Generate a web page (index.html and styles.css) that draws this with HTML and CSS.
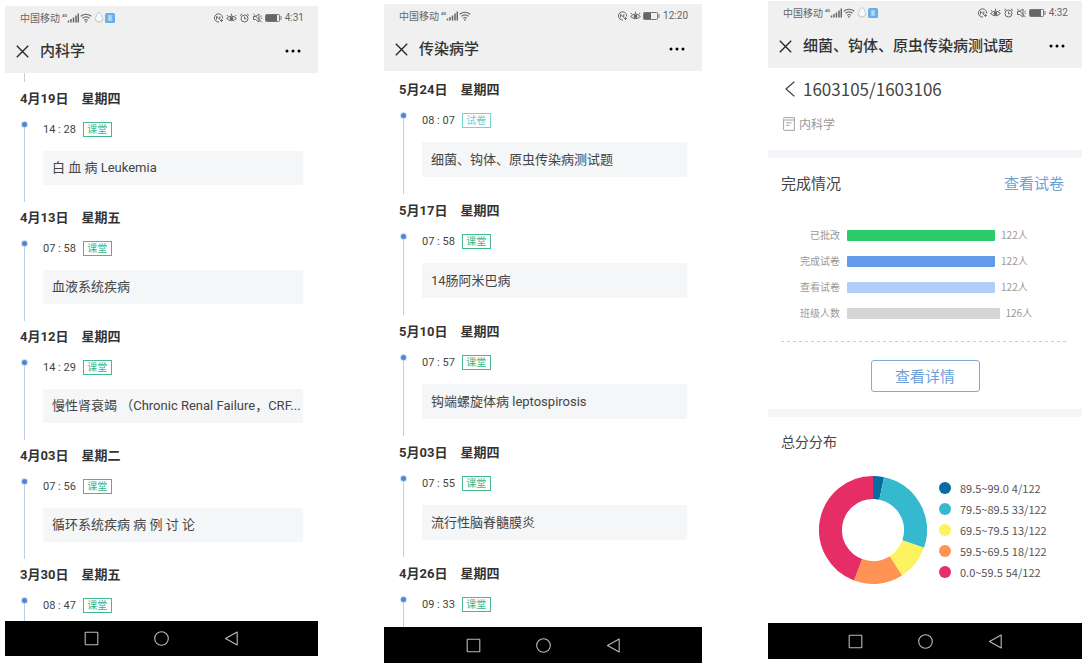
FILE: index.html
```html
<!DOCTYPE html>
<html lang="zh-CN">
<head>
<meta charset="utf-8">
<meta name="viewport" content="width=device-width, initial-scale=1">
<title>课程记录</title>
<link rel="stylesheet" href="styles.css">
</head>
<body>
<svg class="sprite" aria-hidden="true">
  <symbol id="signal" viewBox="0 0 12 10"><path d="M1.500 9.500V7.500M4 9.500V6M6.500 9.500V4.500M9 9.500V2.500M11.300 9.500V.5" stroke="#666" stroke-width="1.500" fill="none"/></symbol>
  <symbol id="wifi" viewBox="0 0 12 10"><path d="M.7 3.300Q6-.9 11.300 3.300M2.500 5.300Q6 2.500 9.500 5.300M4.200 7.300Q6 5.800 7.800 7.300" stroke="#666" stroke-width="1.100" fill="none"/><circle cx="6" cy="8.800" r=".9" fill="#666"/></symbol>
  <symbol id="qq" viewBox="0 0 10 11"><path d="M5 .8C3.200.8 2.500 2.200 2.500 4 1.500 5.500 1 6.800 1.200 8.300L2.200 7.700C2.700 9 3.500 9.600 5 9.600S7.300 9 7.800 7.700L8.800 8.300C9 6.800 8.500 5.500 7.500 4 7.500 2.200 6.800.8 5 .8Z" fill="#f8fafb" stroke="#a9c8d8" stroke-width=".8"/><path d="M2 10h2.500M5.500 10H8" stroke="#e8d477" stroke-width="1.200"/></symbol>
  <symbol id="app" viewBox="0 0 10 10"><rect width="10" height="10" rx="1.500" fill="#69aee8"/><path d="M2.800 3H7.200M2.800 5H7.200M2.800 7H7.200M5 2.500V7.500" stroke="#d8efff" stroke-width=".9"/></symbol>
  <symbol id="nfc" viewBox="0 0 10 10"><path d="M5.500 9A4.100 4.100 0 1 1 9.100 5.500M3 6.500V3.300L6.300 6.300V3.300" stroke="#666" fill="none"/><path d="M6.500 7.500h3M8 6v3" stroke="#666" stroke-width=".9"/></symbol>
  <symbol id="eye" viewBox="0 0 11 10"><path d="M.6 5.500Q5.500.5 10.400 5.500 5.500 10 .6 5.500ZM2 3.300.9 2M5.500 2.500V.7M9 3.300 10.100 2" stroke="#666" fill="none"/><circle cx="5.500" cy="5.400" r="1.800" fill="#666"/></symbol>
  <symbol id="alarm" viewBox="0 0 10 10"><circle cx="5" cy="5.500" r="3.500" stroke="#666" fill="none"/><path d="M5 3.500V5.800H6.800M.6 2.500 2.600.8M9.400 2.500 7.400.8" stroke="#666" fill="none"/></symbol>
  <symbol id="mute" viewBox="0 0 10 10"><path d="M1 3.500H3L6.500 1V9L3 6.500H1ZM.8.8 9.200 9.200M8 3.500 9.300 2.800M8.200 5.300H9.600" stroke="#666" fill="none"/></symbol>
  <symbol id="battery" viewBox="0 0 17 8"><rect x=".5" y=".5" width="14" height="7" rx=".8" stroke="#777" fill="none"/><rect x="1" y="1" width="11" height="6" fill="#666"/><path d="M16 2v4" stroke="#777"/></symbol>
  <symbol id="battery-half" viewBox="0 0 17 8"><rect x=".5" y=".5" width="14" height="7" rx=".8" stroke="#777" fill="none"/><rect x="1" y="1" width="7" height="6" fill="#666"/><path d="M16 2v4" stroke="#777"/></symbol>
  <symbol id="close" viewBox="0 0 13 13"><path d="M.8.8 12.200 12.200M12.200.8.8 12.200" stroke="#222" stroke-width="1.300"/></symbol>
  <symbol id="more" viewBox="0 0 16 4"><circle cx="2" cy="2" r="1.500"/><circle cx="8" cy="2" r="1.500"/><circle cx="14" cy="2" r="1.500"/></symbol>
  <symbol id="nav-square" viewBox="0 0 15 15"><rect x="1.200" y="1.200" width="12.600" height="12.600" rx=".5" stroke="#bbb" stroke-width="1.100" fill="none"/></symbol>
  <symbol id="nav-circle" viewBox="0 0 15 15"><circle cx="7.500" cy="7.500" r="6.800" stroke="#bbb" stroke-width="1.100" fill="none"/></symbol>
  <symbol id="nav-back" viewBox="0 0 15 15"><path d="M13.200 1V14L1.500 7.500Z" stroke="#bbb" stroke-width="1.100" stroke-linejoin="round" fill="none"/></symbol>
  <symbol id="chevron" viewBox="0 0 10 16"><path d="M9.300.8 1 8 9.300 15.200" stroke="#444" stroke-width="1.200" fill="none"/></symbol>
  <symbol id="book" viewBox="0 0 12 14"><path d="M.6 3V12.500Q.6 13.400 1.500 13.400H11.400V.6H1.500Q.6.6.6 1.800 .6 3 1.500 3H11.400M3.200 5.800H8.500M3.200 8.300H6.500" stroke="#999" stroke-width=".9" fill="none"/></symbol>
</svg>

<main class="gallery">
  <section class="phone phone-a">
    <header class="top">
      <div class="status">
        <span>中国移动</span><small>4G</small>
        <svg class="i-signal"><use href="#signal"/></svg><svg class="i-wifi"><use href="#wifi"/></svg><svg class="i-qq"><use href="#qq"/></svg><svg class="i-app"><use href="#app"/></svg>
        <div class="status-right"><svg class="i-mini"><use href="#nfc"/></svg><svg class="i-mini"><use href="#eye"/></svg><svg class="i-mini"><use href="#alarm"/></svg><svg class="i-mini"><use href="#mute"/></svg><svg class="i-battery"><use href="#battery"/></svg><time>4:31</time></div>
      </div>
      <div class="titlebar">
        <button class="icon-button" aria-label="关闭"><svg class="i-close"><use href="#close"/></svg></button>
        <h1>内科学</h1>
        <button class="icon-button" aria-label="更多"><svg class="i-more"><use href="#more"/></svg></button>
      </div>
    </header>
    <div class="timeline">
      <div class="stub"></div>
      <article class="day">
        <h2><span>4月19日</span><span>星期四</span></h2>
        <div class="entry"><div class="rail"></div><div class="lesson"><p class="when"><time>14 : 28</time><span class="tag">课堂</span></p><a class="card" href="#">白 血 病 Leukemia</a></div></div>
      </article>
      <article class="day">
        <h2><span>4月13日</span><span>星期五</span></h2>
        <div class="entry"><div class="rail"></div><div class="lesson"><p class="when"><time>07 : 58</time><span class="tag">课堂</span></p><a class="card" href="#">血液系统疾病</a></div></div>
      </article>
      <article class="day">
        <h2><span>4月12日</span><span>星期四</span></h2>
        <div class="entry"><div class="rail"></div><div class="lesson"><p class="when"><time>14 : 29</time><span class="tag">课堂</span></p><a class="card" href="#">慢性肾衰竭 （Chronic Renal Failure，CRF...</a></div></div>
      </article>
      <article class="day">
        <h2><span>4月03日</span><span>星期二</span></h2>
        <div class="entry"><div class="rail"></div><div class="lesson"><p class="when"><time>07 : 56</time><span class="tag">课堂</span></p><a class="card" href="#">循环系统疾病 病 例 讨 论</a></div></div>
      </article>
      <article class="day day-last">
        <h2><span>3月30日</span><span>星期五</span></h2>
        <div class="entry"><div class="rail"></div><div class="lesson"><p class="when"><time>08 : 47</time><span class="tag">课堂</span></p></div></div>
      </article>
    </div>
    <nav class="keys" aria-label="系统导航">
      <button class="icon-button" aria-label="最近任务"><svg class="i-key"><use href="#nav-square"/></svg></button>
      <button class="icon-button" aria-label="主屏幕"><svg class="i-key"><use href="#nav-circle"/></svg></button>
      <button class="icon-button" aria-label="返回"><svg class="i-key"><use href="#nav-back"/></svg></button>
    </nav>
  </section>

  <section class="phone phone-b">
    <header class="top">
      <div class="status">
        <span>中国移动</span><small>4G</small>
        <svg class="i-signal"><use href="#signal"/></svg><svg class="i-wifi"><use href="#wifi"/></svg>
        <div class="status-right"><svg class="i-mini"><use href="#nfc"/></svg><svg class="i-mini"><use href="#eye"/></svg><svg class="i-battery"><use href="#battery-half"/></svg><time>12:20</time></div>
      </div>
      <div class="titlebar">
        <button class="icon-button" aria-label="关闭"><svg class="i-close"><use href="#close"/></svg></button>
        <h1>传染病学</h1>
        <button class="icon-button" aria-label="更多"><svg class="i-more"><use href="#more"/></svg></button>
      </div>
    </header>
    <div class="timeline">
      <article class="day">
        <h2><span>5月24日</span><span>星期四</span></h2>
        <div class="entry"><div class="rail"></div><div class="lesson"><p class="when"><time>08 : 07</time><span class="tag tag-exam">试卷</span></p><a class="card" href="#">细菌、钩体、原虫传染病测试题</a></div></div>
      </article>
      <article class="day">
        <h2><span>5月17日</span><span>星期四</span></h2>
        <div class="entry"><div class="rail"></div><div class="lesson"><p class="when"><time>07 : 58</time><span class="tag">课堂</span></p><a class="card" href="#">14肠阿米巴病</a></div></div>
      </article>
      <article class="day">
        <h2><span>5月10日</span><span>星期四</span></h2>
        <div class="entry"><div class="rail"></div><div class="lesson"><p class="when"><time>07 : 57</time><span class="tag">课堂</span></p><a class="card" href="#">钩端螺旋体病 leptospirosis</a></div></div>
      </article>
      <article class="day">
        <h2><span>5月03日</span><span>星期四</span></h2>
        <div class="entry"><div class="rail"></div><div class="lesson"><p class="when"><time>07 : 55</time><span class="tag">课堂</span></p><a class="card" href="#">流行性脑脊髓膜炎</a></div></div>
      </article>
      <article class="day day-last">
        <h2><span>4月26日</span><span>星期四</span></h2>
        <div class="entry"><div class="rail"></div><div class="lesson"><p class="when"><time>09 : 33</time><span class="tag">课堂</span></p></div></div>
      </article>
    </div>
    <nav class="keys" aria-label="系统导航">
      <button class="icon-button" aria-label="最近任务"><svg class="i-key"><use href="#nav-square"/></svg></button>
      <button class="icon-button" aria-label="主屏幕"><svg class="i-key"><use href="#nav-circle"/></svg></button>
      <button class="icon-button" aria-label="返回"><svg class="i-key"><use href="#nav-back"/></svg></button>
    </nav>
  </section>

  <section class="phone phone-c">
    <header class="top">
      <div class="status">
        <span>中国移动</span><small>4G</small>
        <svg class="i-signal"><use href="#signal"/></svg><svg class="i-wifi"><use href="#wifi"/></svg><svg class="i-qq"><use href="#qq"/></svg><svg class="i-app"><use href="#app"/></svg>
        <div class="status-right"><svg class="i-mini"><use href="#nfc"/></svg><svg class="i-mini"><use href="#eye"/></svg><svg class="i-mini"><use href="#alarm"/></svg><svg class="i-mini"><use href="#mute"/></svg><svg class="i-battery"><use href="#battery"/></svg><time>4:32</time></div>
      </div>
      <div class="titlebar">
        <button class="icon-button" aria-label="关闭"><svg class="i-close"><use href="#close"/></svg></button>
        <h1>细菌、钩体、原虫传染病测试题</h1>
        <button class="icon-button" aria-label="更多"><svg class="i-more"><use href="#more"/></svg></button>
      </div>
    </header>
    <div class="report">
      <section class="intro">
        <div class="class-row"><button class="icon-button" aria-label="返回上一页"><svg class="i-chevron"><use href="#chevron"/></svg></button><h2>1603105/1603106</h2></div>
        <p class="subject"><svg class="i-book"><use href="#book"/></svg>内科学</p>
      </section>
      <section class="progress">
        <div class="section-head"><h3>完成情况</h3><a href="#">查看试卷</a></div>
        <dl class="bars">
          <div class="bar-row"><dt>已批改</dt><dd><span class="bar bar-green" style="width:66.7%"></span>122人</dd></div>
          <div class="bar-row"><dt>完成试卷</dt><dd><span class="bar bar-blue" style="width:66.7%"></span>122人</dd></div>
          <div class="bar-row"><dt>查看试卷</dt><dd><span class="bar bar-pale" style="width:66.7%"></span>122人</dd></div>
          <div class="bar-row"><dt>班级人数</dt><dd><span class="bar bar-gray" style="width:68.7%"></span>126人</dd></div>
        </dl>
        <div class="divider"></div>
        <button class="detail">查看详情</button>
      </section>
      <section class="scores">
        <h3>总分分布</h3>
        <div class="chart">
          <svg class="donut" viewBox="0 0 108 108" role="img" aria-label="总分分布">
            <g fill="none" stroke-width="23" transform="rotate(-90 54 54)">
              <path d="M96.500 54A42.500 42.500 0 0 1 95.610 62.690" stroke="#076ca1"/>
              <path d="M95.610 62.690A42.500 42.500 0 0 1 40.020 94.130" stroke="#35b9ce"/>
              <path d="M40.020 94.130A42.500 42.500 0 0 1 18.160 76.830" stroke="#fdf360"/>
              <path d="M18.160 76.830A42.500 42.500 0 0 1 14.220 39.020" stroke="#fe9353"/>
              <path d="M14.220 39.020A42.500 42.500 0 0 1 96.500 54" stroke="#e72d66"/>
            </g>
          </svg>
          <ul class="legend">
            <li><i class="dot dot-navy"></i><span>89.5~99.0</span><span>4/122</span></li>
            <li><i class="dot dot-teal"></i><span>79.5~89.5</span><span>33/122</span></li>
            <li><i class="dot dot-yellow"></i><span>69.5~79.5</span><span>13/122</span></li>
            <li><i class="dot dot-orange"></i><span>59.5~69.5</span><span>18/122</span></li>
            <li><i class="dot dot-red"></i><span>0.0~59.5</span><span>54/122</span></li>
          </ul>
        </div>
      </section>
    </div>
    <nav class="keys" aria-label="系统导航">
      <button class="icon-button" aria-label="最近任务"><svg class="i-key"><use href="#nav-square"/></svg></button>
      <button class="icon-button" aria-label="主屏幕"><svg class="i-key"><use href="#nav-circle"/></svg></button>
      <button class="icon-button" aria-label="返回"><svg class="i-key"><use href="#nav-back"/></svg></button>
    </nav>
  </section>
</main>
</body>
</html>
```

FILE: styles.css
```css
* { box-sizing: border-box; }
body, h1, h2, h3, p, dl, dd, ul { margin: 0; padding: 0; }
body { background: #fff; color: #444; font-family: Roboto, "Noto Sans CJK SC", sans-serif; font-size: 13px; }
a { color: inherit; text-decoration: none; }
svg { display: block; flex: none; }
.sprite { display: none; }
.icon-button { display: flex; padding: 0; border: 0; background: none; cursor: pointer; }

.gallery { display: grid; grid-template-columns: 313fr 318fr 314fr; gap: 66px; min-height: 100vh; padding: 0 6px 0 5px; }
.phone { display: flex; flex-direction: column; min-width: 0; background: #fff; }
.phone-a { margin: 6px 0 8px; }
.phone-b { margin: 4px 0 1px; }
.phone-c { margin: 1px 0 5px; }

.top { background: #f0f0f0; }
.status { display: flex; align-items: center; height: 23px; padding: 0 14px 0 15px; color: #666; font-size: 10px; }
.status small { align-self: flex-start; margin: 7px 0 0 2px; font-size: 4px; line-height: 5px; font-weight: 700; }
.status-right { display: flex; align-items: center; gap: 2px; margin-left: auto; }
.status-right time { margin-left: 1px; }
.i-signal { width: 12px; height: 10px; }
.i-wifi { width: 12px; height: 10px; margin-left: 1px; }
.i-qq { width: 10px; height: 11px; margin-left: 2px; }
.i-app { width: 10px; height: 10px; margin-left: 1px; }
.i-mini { width: 11px; height: 10px; }
.i-battery { width: 17px; height: 8px; }
.titlebar { display: flex; align-items: center; height: 44px; padding: 0 17px 0 11px; }
.titlebar h1 { flex: 1; min-width: 0; margin-left: 11px; color: #333; font-size: 15px; line-height: 24px; font-weight: 500; white-space: nowrap; }
.i-close { width: 13px; height: 13px; }
.i-more { width: 16px; height: 4px; }

.timeline { display: flex; flex: 1; flex-direction: column; padding: 0 15px; }
.phone-b .timeline { padding-top: 9px; }
.stub { width: 1px; height: 9px; margin: 0 0 7px 4px; background: #b9d0e8; }
.day { display: flex; flex-direction: column; margin-bottom: 6px; }
.phone-b .day { margin-bottom: 7px; }
.day h2 { display: flex; gap: 13px; margin-bottom: 12px; color: #333; font-size: 13px; line-height: 20px; font-weight: 700; }
.entry { display: flex; flex: 1; gap: 15px; }
.rail { display: flex; flex-direction: column; align-items: center; width: 8px; padding-top: 1px; }
.rail::before { width: 5px; height: 5px; border-radius: 50%; background: #5186cf; box-shadow: 0 0 0 1px #c9ddf6; content: ""; }
.rail::after { flex: 1; width: 1px; background: #b9d0e8; content: ""; }
.lesson { flex: 1; min-width: 0; padding-bottom: 17px; }
.when { display: flex; align-items: center; gap: 7px; height: 17px; margin-bottom: 13px; font-size: 11px; }
.tag { width: 29px; border: 1px solid #45b990; color: #35b585; font-size: 10px; line-height: 13px; text-align: center; }
.tag-exam { border-color: #75d3d0; color: #6bd0cf; }
.card { display: block; padding: 0 2px 0 9px; background: #f5f6f8; line-height: 34px; white-space: nowrap; }
.phone-b .card { line-height: 35px; }
.timeline .day-last { flex: 1; margin-bottom: 0; }
.day-last .lesson { padding: 0; }
.day-last .when { margin: 0; }

.keys { display: flex; align-items: center; justify-content: center; gap: 55px; height: 36px; background: #000; }
.phone-a .keys { height: 35px; }
.i-key { width: 15px; height: 15px; }

.report { flex: 1; font-family: "Noto Sans CJK SC", sans-serif; }
.intro { padding: 7px 15px 17px; border-bottom: 8px solid #f4f5f8; }
.class-row { display: flex; align-items: center; gap: 8px; padding-left: 2px; }
.class-row h2 { color: #444; font-size: 17px; line-height: 28px; font-weight: 400; }
.i-chevron { width: 10px; height: 16px; }
.subject { display: flex; align-items: center; gap: 4px; margin-top: 12px; color: #999; font-size: 12px; line-height: 18px; }
.i-book { width: 12px; height: 14px; }
.progress { padding: 14px 13px 17px; border-bottom: 8px solid #f4f5f6; }
.section-head { display: flex; justify-content: space-between; padding-right: 5px; font-size: 15px; line-height: 22px; }
.section-head h3 { color: #444; font-size: 15px; font-weight: 400; }
.section-head a { color: #6ba1d8; }
.bars { display: grid; gap: 10px; margin-top: 33px; color: #999; font-size: 10px; line-height: 16px; }
.bar-row { display: flex; gap: 7px; }
.bar-row dt { width: 59px; text-align: right; }
.bar-row dd { display: flex; flex: 1; align-items: center; gap: 6px; }
.bar { height: 11px; border-radius: 1px; }
.bar-green { background: #2bcb6c; }
.bar-blue { background: #639bea; }
.bar-pale { background: #b2cdf8; }
.bar-gray { background: #d5d5d5; }
.divider { height: 1px; margin: 20px 0 18px; background: repeating-linear-gradient(90deg, #ccc 0 3px, transparent 3px 6px); }
.detail { display: block; width: 109px; height: 32px; margin: 0 auto; padding: 0; border: 1px solid #82abd6; border-radius: 3px; background: #fff; color: #6ba1d8; font: inherit; font-size: 15px; line-height: 22px; cursor: pointer; }
.scores { padding: 14px 13px 0; }
.scores h3 { color: #444; font-size: 14px; line-height: 20px; font-weight: 400; }
.chart { display: flex; align-items: center; gap: 12px; margin-top: 25px; padding-left: 38px; }
.donut { width: 108px; height: 108px; }
.legend { display: grid; gap: 5px; color: #555; font-size: 11px; line-height: 16px; list-style: none; }
.legend li { display: flex; align-items: center; gap: 3px; white-space: nowrap; }
.dot { width: 12px; height: 12px; margin-right: 6px; border-radius: 50%; }
.dot-navy { background: #076ca1; }
.dot-teal { background: #35b9ce; }
.dot-yellow { background: #fdf360; }
.dot-orange { background: #fe9353; }
.dot-red { background: #e72d66; }
```
